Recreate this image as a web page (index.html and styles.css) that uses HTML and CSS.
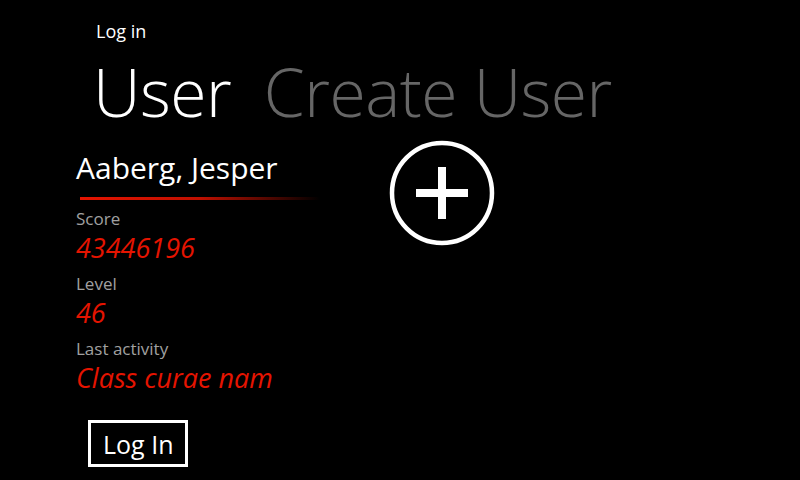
FILE: index.html
```html
<!DOCTYPE html>
<html>
<head>
<meta charset="utf-8">
<link rel="stylesheet" href="styles.css">
</head>
<body>
<div class="page">
  <div class="app-title">Log in</div>
  <div class="pivot">
    <span class="pivot-item active">User</span>
    <span class="pivot-item">Create User</span>
  </div>
  <div class="content">
    <div class="details">
      <div class="name">Aaberg, Jesper</div>
      <div class="underline"></div>
      <div class="label">Score</div>
      <div class="value">43446196</div>
      <div class="label">Level</div>
      <div class="value">46</div>
      <div class="label">Last activity</div>
      <div class="value">Class curae nam</div>
      <button class="login">Log In</button>
    </div>
    <div class="add">
      <svg width="108" height="108" viewBox="0 0 108 108">
        <circle cx="54" cy="54" r="50" fill="none" stroke="#fff" stroke-width="4.5"/>
        <rect x="28" y="50" width="52" height="8" fill="#fff"/>
        <rect x="50" y="28" width="8" height="52" fill="#fff"/>
      </svg>
    </div>
  </div>
</div>
</body>
</html>
```
FILE: styles.css
```css
html, body {
  margin: 0;
  padding: 0;
  background: #000;
}
body {
  width: 800px;
  height: 480px;
  overflow: hidden;
  font-family: "Open Sans", "Noto Sans", sans-serif;
  color: #fff;
}
.page {
  display: flex;
  flex-direction: column;
}
.app-title {
  margin: 18px 0 0 96px;
  font-size: 18px;
  line-height: 26px;
}
.pivot {
  margin: 5px 0 0 93px;
  font-size: 66px;
  font-weight: 300;
  line-height: 84px;
  white-space: nowrap;
  letter-spacing: -0.5px;
}
.pivot-item {
  color: #666;
  margin-right: 16px;
}
.pivot-item.active {
  color: #fff;
}
.content {
  display: flex;
  margin-top: 15px;
  padding-left: 76px;
}
.details {
  width: 300px;
  display: flex;
  flex-direction: column;
  align-items: flex-start;
}
.name {
  font-size: 30px;
  line-height: 40px;
}
.underline {
  width: 240px;
  height: 3px;
  margin: 9px 0 0 4px;
  background: linear-gradient(to right, #e51400 0%, #c01000 50%, rgba(229,20,0,0) 100%);
}
.label {
  font-size: 17px;
  line-height: 22px;
  color: #a0a0a0;
  margin-top: 8px;
}
.value {
  font-size: 27px;
  line-height: 34px;
  font-style: italic;
  color: #e51400;
  margin-top: 1px;
}
.login {
  margin: 25px 0 0 12px;
  background: #000;
  color: #fff;
  border: 3px solid #fff;
  font-family: inherit;
  font-size: 25px;
  padding: 0 12px;
  height: 47px;
  line-height: 38px;
}
.add {
  margin: -9px 0 0 12px;
}
```
